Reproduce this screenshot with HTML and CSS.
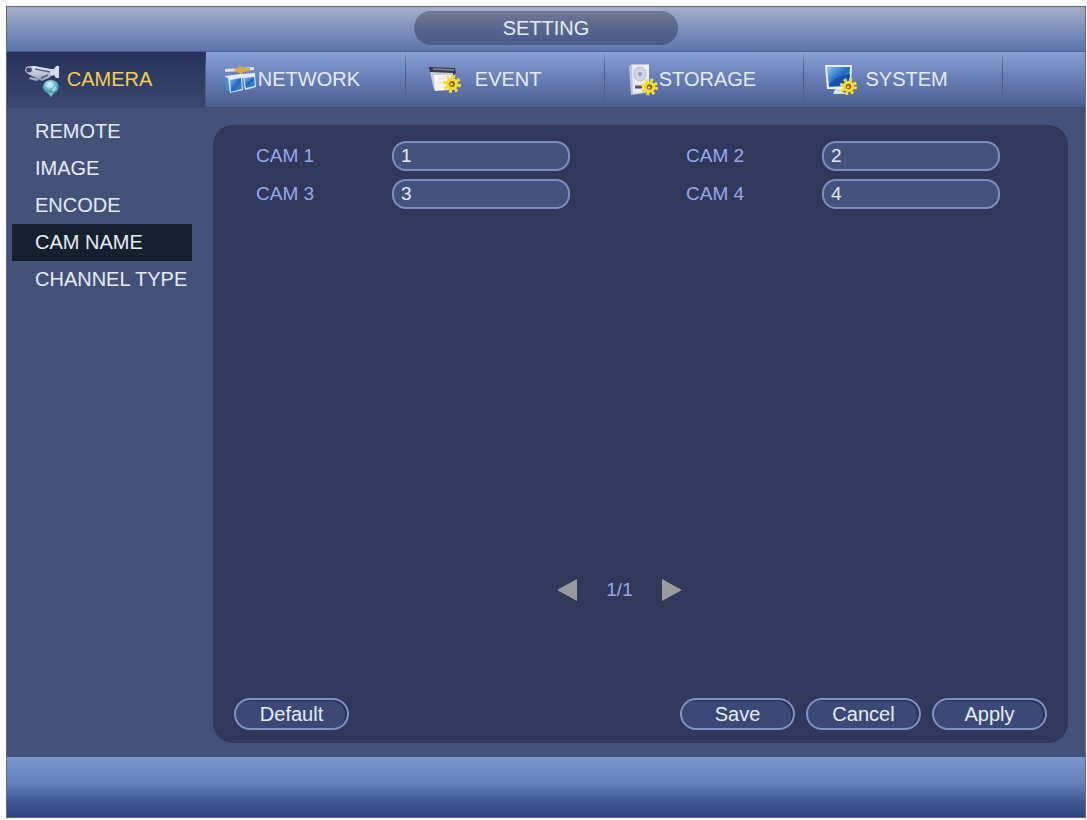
FILE: index.html
```
<!DOCTYPE html>
<html lang="en">
<head>
    <meta charset="UTF-8">
    <meta name="viewport" content="width=device-width, initial-scale=1.0">
    <title>Setting</title>
    <link rel="stylesheet" href="styles.css">
</head>
<body>
    <svg class="icon-defs" aria-hidden="true">
        <defs>
            <linearGradient id="blueGlass" x1="0" y1="0" x2="1" y2="1">
                <stop offset="0" stop-color="#8cc4ee"/>
                <stop offset="0.5" stop-color="#2468c4"/>
                <stop offset="1" stop-color="#3f9bea"/>
            </linearGradient>
            <linearGradient id="metal" x1="0" y1="0" x2="0" y2="1">
                <stop offset="0" stop-color="#f0f1fa"/>
                <stop offset="1" stop-color="#8f97b8"/>
            </linearGradient>
            <radialGradient id="globe" cx="0.4" cy="0.3" r="0.8">
                <stop offset="0" stop-color="#c4f2f6"/>
                <stop offset="0.5" stop-color="#5fb6cc"/>
                <stop offset="1" stop-color="#1f6288"/>
            </radialGradient>
            <symbol id="gear" viewBox="0 0 16 16">
                <circle cx="8" cy="8" r="6" fill="none" stroke="#f4e02c" stroke-width="4" stroke-dasharray="2.4 2.3"/>
                <circle cx="8" cy="8" r="5.4" fill="#f4dc28"/>
                <circle cx="8" cy="8" r="2.6" fill="#8a6a26"/>
                <circle cx="7.6" cy="8.4" r="1.2" fill="#d9cf8a"/>
            </symbol>
        </defs>
    </svg>

    <div class="window">
        <header class="title-bar">
            <h1 class="title">SETTING</h1>
        </header>

        <nav class="tabs">
            <a href="#camera" class="tab active">
                <svg class="tab-icon" width="42" height="36" viewBox="0 0 42 36" aria-hidden="true">
                    <path d="M4 6 L12 5 L29 8 L31 13 L27 17 L20 20 L12 16 L6 13 Z" fill="url(#metal)"/>
                    <ellipse cx="7" cy="9" rx="3.5" ry="3" fill="#3e4568" stroke="#c9cde0"/>
                    <path d="M13 8 L28 11 M19 17 L26 14" stroke="#5c6488" stroke-width="1.5"/>
                    <path d="M8 16 L17 18 L15 20 L7 18 Z" fill="#a3aac6"/>
                    <path d="M28 8 L32 8 L34 5 L37 5 L37 17 L34 17 L32 14 L29 15 Z" fill="#d9dcec"/>
                    <ellipse cx="29" cy="26" rx="8" ry="7" fill="url(#globe)"/>
                    <path d="M24 23 L29 21 L32 24 L29 27 L25 26 Z M30 28 L34 25 L35 28 L31 32 Z" fill="#d4f3ef" opacity="0.6"/>
                    <path d="M25 31 L32 32 L29 36 Z" fill="#76b9c8"/>
                </svg>
                <span class="tab-label">CAMERA</span>
            </a>
            <a href="#network" class="tab">
                <svg class="tab-icon" width="42" height="36" viewBox="0 0 42 36" aria-hidden="true">
                    <path d="M4 8 L33 6 L33 9 L4 11 Z" fill="#dce5f4"/>
                    <path d="M12 8 L16 7 L19 5 L22 7 L30 7 L27 10 L22 11 L20 14 L17 11 Z" fill="#dba83c"/>
                    <path d="M4 15 L20 13 L34 12 L34 15 L21 17 L7 19 Z" fill="#e4edfa"/>
                    <path d="M3 16 L8 17 L9 31 L5 29 Z" fill="#4f8bd2"/>
                    <path d="M7 17 L21 15 L22 29 L9 32 Z" fill="#d9eafb"/>
                    <path d="M9 19 L20 17 L21 28 L10 31 Z" fill="url(#blueGlass)"/>
                    <path d="M22 15 L34 14 L35 26 L24 29 Z" fill="#d9eafb"/>
                    <path d="M23 17 L33 16 L34 25 L25 27 Z" fill="url(#blueGlass)"/>
                </svg>
                <span class="tab-label">NETWORK</span>
            </a>
            <a href="#event" class="tab">
                <svg class="tab-icon" width="42" height="36" viewBox="0 0 42 36" aria-hidden="true">
                    <path d="M8 6 L34 7 L35 12 L32 14 L9 12 Z" fill="#363a48"/>
                    <path d="M12 8 L33 9" stroke="#868b99" stroke-width="1.5"/>
                    <path d="M9 11 L32 12 L32 27 L13 29 Z" fill="#c8cdd8"/>
                    <path d="M13 14 L30 14 L28 29 L14 30 Z" fill="#f4f5f5"/>
                    <path d="M17 18 L24 17 M17 22 L22 21" stroke="#dcdcde"/>
                    <use href="#gear" x="22" y="14" width="18" height="18"/>
                </svg>
                <span class="tab-label">EVENT</span>
            </a>
            <a href="#storage" class="tab">
                <svg class="tab-icon" width="42" height="36" viewBox="0 0 42 36" aria-hidden="true">
                    <path d="M9 5 L12 3 L29 3 L29 30 L26 32 L11 34 Z" fill="#bac5dd"/>
                    <path d="M12 4 L29 4 L29 30 L13 33 Z" fill="#eaedf7"/>
                    <ellipse cx="20" cy="13" rx="6" ry="7" fill="#d0d6e6" stroke="#b0b9d2"/>
                    <circle cx="20" cy="13" r="2" fill="#8f99b5"/>
                    <path d="M15 26 L22 26" stroke="#4c5368" stroke-width="3"/>
                    <use href="#gear" x="21" y="17" width="17" height="18"/>
                </svg>
                <span class="tab-label">STORAGE</span>
            </a>
            <a href="#system" class="tab">
                <svg class="tab-icon" width="42" height="36" viewBox="0 0 42 36" aria-hidden="true">
                    <path d="M6 4 L33 4 L32 28 L8 28 Z" fill="#e6f0fb"/>
                    <path d="M8 6 L31 6 L30 25 L10 26 Z" fill="url(#blueGlass)"/>
                    <path d="M10 25 C15 16 22 15 31 13 L30 25 Z" fill="#174fae"/>
                    <path d="M16 28 L24 28 L24 31 L29 33 L14 33 Z" fill="#d7dfed"/>
                    <use href="#gear" x="21" y="17" width="17" height="17"/>
                </svg>
                <span class="tab-label">SYSTEM</span>
            </a>
        </nav>

        <div class="content">
            <nav class="sidebar">
                <a href="#remote" class="sidebar-item">REMOTE</a>
                <a href="#image" class="sidebar-item">IMAGE</a>
                <a href="#encode" class="sidebar-item">ENCODE</a>
                <a href="#cam-name" class="sidebar-item active">CAM NAME</a>
                <a href="#channel-type" class="sidebar-item">CHANNEL TYPE</a>
            </nav>

            <form class="panel">
                <div class="form-grid">
                    <div class="form-group">
                        <label for="cam1">CAM 1</label>
                        <input type="text" id="cam1" class="form-control" value="1">
                    </div>
                    <div class="form-group">
                        <label for="cam2">CAM 2</label>
                        <input type="text" id="cam2" class="form-control" value="2">
                    </div>
                    <div class="form-group">
                        <label for="cam3">CAM 3</label>
                        <input type="text" id="cam3" class="form-control" value="3">
                    </div>
                    <div class="form-group">
                        <label for="cam4">CAM 4</label>
                        <input type="text" id="cam4" class="form-control" value="4">
                    </div>
                </div>

                <div class="pager">
                    <button type="button" class="pager-btn" aria-label="Previous page">
                        <svg width="22" height="22" viewBox="0 0 22 22"><path d="M1 11 L21 0 L21 22 Z" fill="#989b98"/></svg>
                    </button>
                    <span class="pager-text">1/1</span>
                    <button type="button" class="pager-btn" aria-label="Next page">
                        <svg width="22" height="22" viewBox="0 0 22 22"><path d="M21 11 L1 0 L1 22 Z" fill="#989b98"/></svg>
                    </button>
                </div>

                <div class="actions">
                    <button type="button" class="btn btn-default">Default</button>
                    <button type="submit" class="btn">Save</button>
                    <button type="button" class="btn">Cancel</button>
                    <button type="button" class="btn">Apply</button>
                </div>
            </form>
        </div>

        <footer class="footer"></footer>
    </div>
</body>
</html>
```

FILE: styles.css
```
* {
    box-sizing: border-box;
}

body {
    margin: 0;
    padding: 6px 1px 2px 6px;
    min-height: 100vh;
    display: flex;
    background-color: #fff;
    font-family: "Liberation Sans", Arial, sans-serif;
    font-size: 20px;
    line-height: 24px;
    color: #e4ecfa;
}

a {
    color: inherit;
    text-decoration: none;
}

.icon-defs {
    position: absolute;
    width: 0;
    height: 0;
}

.window {
    flex: 1;
    min-width: 0;
    display: flex;
    flex-direction: column;
    border: 1px solid #5c6784;
    background-color: #44527a;
}

/* Title */
.title-bar {
    height: 44px;
    display: flex;
    justify-content: center;
    align-items: center;
    padding-bottom: 2px;
    background: linear-gradient(#a5adc8, #8294bd 45%, #5c74ad);
}

.title {
    margin: 0;
    width: 264px;
    padding: 5px 0;
    border-radius: 17px;
    background: linear-gradient(#717996, #56648c 60%, #49598a);
    font-size: 20px;
    font-weight: 400;
    text-align: center;
}

/* Tabs */
.tabs {
    height: 57px;
    display: grid;
    grid-template-columns: repeat(5, 200fr) 82fr;
    border-top: 1px solid #4a5c8c;
    border-bottom: 1px solid #3b4a78;
    background: linear-gradient(#89a0d6, #6a80b8 45%, #4b5e90);
}

.tab {
    display: grid;
    align-items: center;
    padding: 0 0 2px 7px;
    border-right: 1px solid;
    border-image: linear-gradient(transparent, #4d608f 30%, #4d608f 80%, transparent) 1;
}

.tab.active {
    background: linear-gradient(#27335c, #3a476e);
    color: #f2cf52;
}

/* icon and label share one cell so the label stays centred */
.tab-icon,
.tab-label {
    grid-area: 1 / 1;
}

.tab-icon {
    justify-self: start;
    margin-left: 8px;
}

.tab-label {
    justify-self: center;
}

/* Content */
.content {
    flex: 1;
    display: flex;
    padding: 17px 17px 14px 5px;
}

.sidebar {
    width: 201px;
    padding-right: 21px;
    margin-top: -12px;
}

.sidebar-item {
    display: block;
    padding: 6px 0 7px 23px;
    white-space: nowrap;
}

.sidebar-item.active {
    background-color: #16202f;
}

.panel {
    flex: 1;
    min-width: 0;
    display: flex;
    flex-direction: column;
    padding: 16px 21px 13px;
    border-radius: 20px;
    background-color: #30385c;
}

.form-grid {
    display: grid;
    grid-template-columns: repeat(2, minmax(0, 1fr));
    gap: 8px 116px;
    padding: 0 47px 0 22px;
    font-size: 19px;
}

.form-group {
    display: flex;
    align-items: center;
}

.form-group label {
    width: 136px;
    color: #98a8ea;
}

.form-control {
    flex: 1;
    min-width: 0;
    height: 30px;
    padding: 0 7px;
    border: 2px solid #7c8dc0;
    border-radius: 14px;
    background-color: #44527e;
    color: #e4ecfa;
    font: inherit;
}

.form-control:focus {
    border-color: #b4c2ee;
    outline: none;
}

.pager {
    display: flex;
    justify-content: center;
    align-items: center;
    gap: 28px;
    margin: auto 42px 96px 0;
}

.pager-btn {
    display: flex;
    padding: 0;
    border: none;
    background: none;
    cursor: pointer;
}

.pager-text {
    font-size: 19px;
    color: #98a8ea;
}

.actions {
    display: flex;
    gap: 11px;
}

.btn {
    width: 115px;
    height: 32px;
    padding: 0;
    border: 2px solid #8292c6;
    border-radius: 16px;
    background-color: #3c4977;
    box-shadow: inset -2px 1px 0 #28315c;
    color: #e4ecfa;
    font: inherit;
    cursor: pointer;
}

.btn:hover {
    background-color: #4a588a;
}

.btn-default {
    margin-right: auto;
}

.footer {
    height: 60px;
    background: linear-gradient(#7b98cf, #6580b9 45%, #3e5892 75%, #304580);
}
```
